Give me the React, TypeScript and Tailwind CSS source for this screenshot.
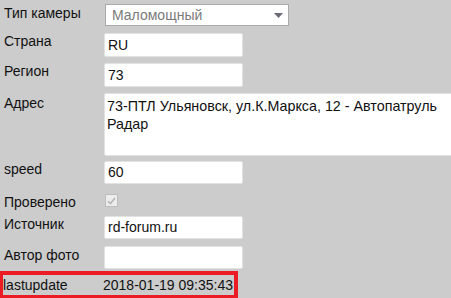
import React from "react";

const font = { fontFamily: '"Liberation Sans", Arial, sans-serif' };

function Label({ children, pt = "pt-0" }: { children: React.ReactNode; pt?: string }) {
  return <div className={`w-[104px] shrink-0 pl-[4px] text-[14px] leading-[17px] text-[#111] ${pt}`}>{children}</div>;
}

function Input({ value, w = "w-[139px]", h = "h-[24px]" }: { value?: string; w?: string; h?: string }) {
  return (
    <div className={`${w} ${h} bg-white border border-[#e2e2e2] rounded-[2px] pl-[3px] flex items-center text-[14px] leading-[17px] text-[#111]`}>
      {value}
    </div>
  );
}

export default function App() {
  return (
    <div className="w-[451px] h-[298px] overflow-hidden bg-[#cccccc] text-black" style={font}>
      <div className="flex flex-col">
        {/* Тип камеры */}
        <div className="flex items-start mt-[4px]">
          <Label pt="pt-[1px]">Тип камеры</Label>
          <div className="ml-[1px] w-[184px] h-[22px] bg-white border border-[#aaaaaa] flex items-center justify-between pl-[6px] pr-[5px]">
            <span className="text-[14px] leading-[17px] text-[#7a7a7a]">Маломощный</span>
            <svg width="9" height="5" viewBox="0 0 9 5">
              <polygon points="0,0 9,0 4.5,5" fill="#6b6b78" />
            </svg>
          </div>
        </div>
        {/* Страна */}
        <div className="flex items-start mt-[7px]">
          <Label>Страна</Label>
          <Input value="RU" />
        </div>
        {/* Регион */}
        <div className="flex items-start mt-[6px]">
          <Label>Регион</Label>
          <Input value="73" />
        </div>
        {/* Адрес */}
        <div className="flex items-start mt-[6px]">
          <Label pt="pt-[2px]">Адрес</Label>
          <div className="w-[360px] h-[63px] shrink-0 bg-white border border-[#e2e2e2] rounded-[2px] pl-[2px] pt-[3px] text-[14.3px] leading-[18px] text-[#111]">
            73-ПТЛ Ульяновск, ул.К.Маркса, 12 - Автопатруль
            <br />
            Радар
          </div>
        </div>
        {/* speed */}
        <div className="flex items-start mt-[5px]">
          <Label>speed</Label>
          <Input value="60" h="h-[23px]" />
        </div>
        {/* Проверено */}
        <div className="flex items-start mt-[7px] h-[20px]">
          <Label pt="pt-[3px]">Проверено</Label>
          <div className="mt-[3px] ml-[1px] w-[13px] h-[13px] bg-[#ededed] border border-[#bdbdbd] flex items-center justify-center">
            <svg width="9" height="8" viewBox="0 0 9 8">
              <path d="M1 4.2 L3.4 6.6 L8 1" stroke="#b5b5b5" strokeWidth="1.6" fill="none" />
            </svg>
          </div>
        </div>
        {/* Источник */}
        <div className="flex items-start mt-[5px]">
          <Label>Источник</Label>
          <Input value="rd-forum.ru" h="h-[23px]" />
        </div>
        {/* Автор фото */}
        <div className="flex items-start mt-[7px]">
          <Label pt="pt-[1px]">Автор фото</Label>
          <Input h="h-[23px]" />
        </div>
        {/* lastupdate */}
        <div className="ml-[-1px] mt-[2px] w-[239px] h-[28px] border-4 border-[#ec1c24] flex items-center">
          <div className="w-[100px] pl-[0px] text-[14px] leading-[17px] text-[#111]">lastupdate</div>
          <div className="text-[14px] leading-[17px] text-[#111]">2018-01-19 09:35:43</div>
        </div>
      </div>
    </div>
  );
}
